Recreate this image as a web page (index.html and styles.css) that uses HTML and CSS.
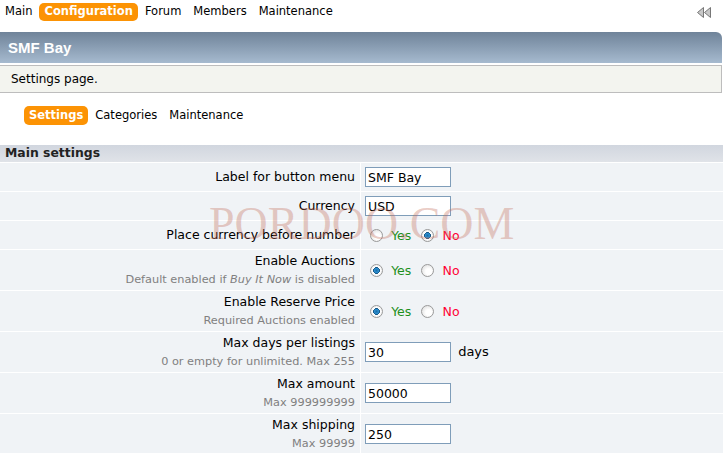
FILE: index.html
```html
<!DOCTYPE html>
<html lang="en">
<head>
  <meta charset="UTF-8" />
  <title>SMF Bay - Settings</title>
  <link rel="stylesheet" href="styles.css">
</head>
<body>
  <div class="topbar">
    <ul class="menu">
      <li><a href="#">Main</a></li>
      <li class="active"><a href="#">Configuration</a></li>
      <li><a href="#">Forum</a></li>
      <li><a href="#">Members</a></li>
      <li><a href="#">Maintenance</a></li>
    </ul>
    <svg class="collapse" width="15" height="11" viewBox="0 0 15 11">
      <path d="M6.5 0.5 L0.5 5.5 L6.5 10.5 Z" fill="#c8c8c8" stroke="#777"/>
      <path d="M13.5 0.5 L7.5 5.5 L13.5 10.5 Z" fill="#c8c8c8" stroke="#777"/>
    </svg>
  </div>

  <div class="cat-bar">SMF Bay</div>
  <div class="info">Settings page.</div>

  <ul class="subtabs">
    <li class="active"><a href="#">Settings</a></li>
    <li><a href="#">Categories</a></li>
    <li><a href="#">Maintenance</a></li>
  </ul>

  <div class="settings">
    <div class="title-bar">Main settings</div>
    <table class="form">
      <tr>
        <td class="lbl">Label for button menu</td>
        <td class="val"><input type="text" value="SMF Bay"></td>
      </tr>
      <tr>
        <td class="lbl">Currency</td>
        <td class="val"><input type="text" value="USD"></td>
      </tr>
      <tr>
        <td class="lbl">Place currency before number</td>
        <td class="val">
          <input type="radio" name="before"> <span class="yes">Yes</span>
          <input type="radio" name="before" checked> <span class="no">No</span>
        </td>
      </tr>
      <tr class="tall">
        <td class="lbl">Enable Auctions<div class="hint">Default enabled if <em>Buy It Now</em> is disabled</div></td>
        <td class="val">
          <input type="radio" name="auct" checked> <span class="yes">Yes</span>
          <input type="radio" name="auct"> <span class="no">No</span>
        </td>
      </tr>
      <tr class="tall">
        <td class="lbl">Enable Reserve Price<div class="hint">Required Auctions enabled</div></td>
        <td class="val">
          <input type="radio" name="res" checked> <span class="yes">Yes</span>
          <input type="radio" name="res"> <span class="no">No</span>
        </td>
      </tr>
      <tr class="tall">
        <td class="lbl">Max days per listings<div class="hint">0 or empty for unlimited. Max 255</div></td>
        <td class="val"><input type="text" value="30"> days</td>
      </tr>
      <tr class="tall">
        <td class="lbl">Max amount<div class="hint">Max 999999999</div></td>
        <td class="val"><input type="text" value="50000"></td>
      </tr>
      <tr class="tall">
        <td class="lbl">Max shipping<div class="hint">Max 99999</div></td>
        <td class="val"><input type="text" value="250"></td>
      </tr>
    </table>
  </div>

  <div class="watermark">PORDOO.COM</div>
</body>
</html>
```

FILE: styles.css
```css
html, body {
  margin: 0;
  padding: 0;
  background: #fff;
  font-family: "DejaVu Sans", Verdana, sans-serif;
  font-size: 12px;
  color: #000;
  overflow: hidden;
}

a {
  color: #000;
  text-decoration: none;
}

.topbar {
  display: flex;
  align-items: center;
  justify-content: space-between;
  height: 22px;
  padding: 1px 11px 0 0;
}

.menu, .subtabs {
  list-style: none;
  margin: 0;
  padding: 0;
  display: flex;
  align-items: center;
  gap: 2px;
}

.menu li a, .subtabs li a {
  display: block;
  padding: 2px 5px 3px;
  border-radius: 5px;
  font-size: 11.5px;
  line-height: 13px;
}

.menu li.active a, .subtabs li.active a {
  background: #fc9304;
  color: #fff;
  font-weight: bold;
}

.collapse {
  display: block;
}

.cat-bar {
  margin-top: 9px;
  height: 31px;
  line-height: 31px;
  padding-left: 8px;
  margin-right: 1px;
  background: linear-gradient(#6f8399, #a6bacf);
  border-top-right-radius: 6px;
  color: #fff;
  font-family: "Liberation Sans", Arial, sans-serif;
  font-weight: bold;
  font-size: 15px;
}

.info {
  margin-top: 2px;
  margin-right: 1px;
  height: 26px;
  line-height: 26px;
  padding-left: 11px;
  background: #f3f4ef;
  border: 1px solid #bdbdbd;
  border-left: none;
}

.subtabs {
  padding: 13px 0 0 24px;
  height: 19px;
}

.subtabs li a {
  padding: 3px 5px 3px;
}

.settings {
  margin-top: 20px;
}

.title-bar {
  height: 17px;
  line-height: 16px;
  padding-left: 5px;
  background: linear-gradient(#d1d6df, #e0e3e8);
  font-weight: bold;
  font-size: 12.4px;
  color: #222;
}

.form {
  width: 100%;
  border-collapse: collapse;
  background: #f0f3f6;
}

.form td {
  border-top: 1px solid #fff;
  padding: 0 5px;
  height: 28px;
  vertical-align: middle;
}

.form tr.tall td {
  height: 40px;
}

.form td.lbl {
  width: 350px;
  text-align: right;
  border-right: 1px solid #fff;
  font-size: 12.5px;
  line-height: 16px;
}

.form td.val {
  padding-left: 4px;
  font-size: 13px;
}

.hint {
  color: #808080;
  font-size: 11.3px;
  line-height: 17px;
  padding-top: 2px;
}

.hint em {
  font-style: italic;
}

input[type=text] {
  width: 86px;
  height: 20px;
  box-sizing: border-box;
  border: 1px solid #7f9db9;
  padding: 1px 2px;
  font-family: "DejaVu Sans", Verdana, sans-serif;
  font-size: 12.5px;
  vertical-align: middle;
  margin: 0 3px 0 0;
}

input[type=radio] {
  appearance: none;
  -webkit-appearance: none;
  width: 13px;
  height: 13px;
  margin: 0 4px 0 5px;
  border-radius: 50%;
  border: 1px solid #9a9a9a;
  background: radial-gradient(circle at 60% 60%, #fff 30%, #d6d6d6 100%);
  vertical-align: middle;
  position: relative;
  top: -1px;
}

input[type=radio]:checked {
  background: radial-gradient(circle at 50% 50%, #1b6fa8 0, #2d8fd0 28%, #0d4e7d 40%, #fff 46%, #e2e2e2 100%);
}

.yes {
  color: #1c8f1c;
  font-size: 12.5px;
  margin-right: 1px;
}

.no {
  color: #ff0033;
  font-size: 12.5px;
}

.watermark {
  position: absolute;
  left: 209px;
  top: 197px;
  font-family: "Liberation Serif", "Times New Roman", serif;
  font-size: 46px;
  color: rgba(196, 110, 90, 0.35);
  pointer-events: none;
}
```
